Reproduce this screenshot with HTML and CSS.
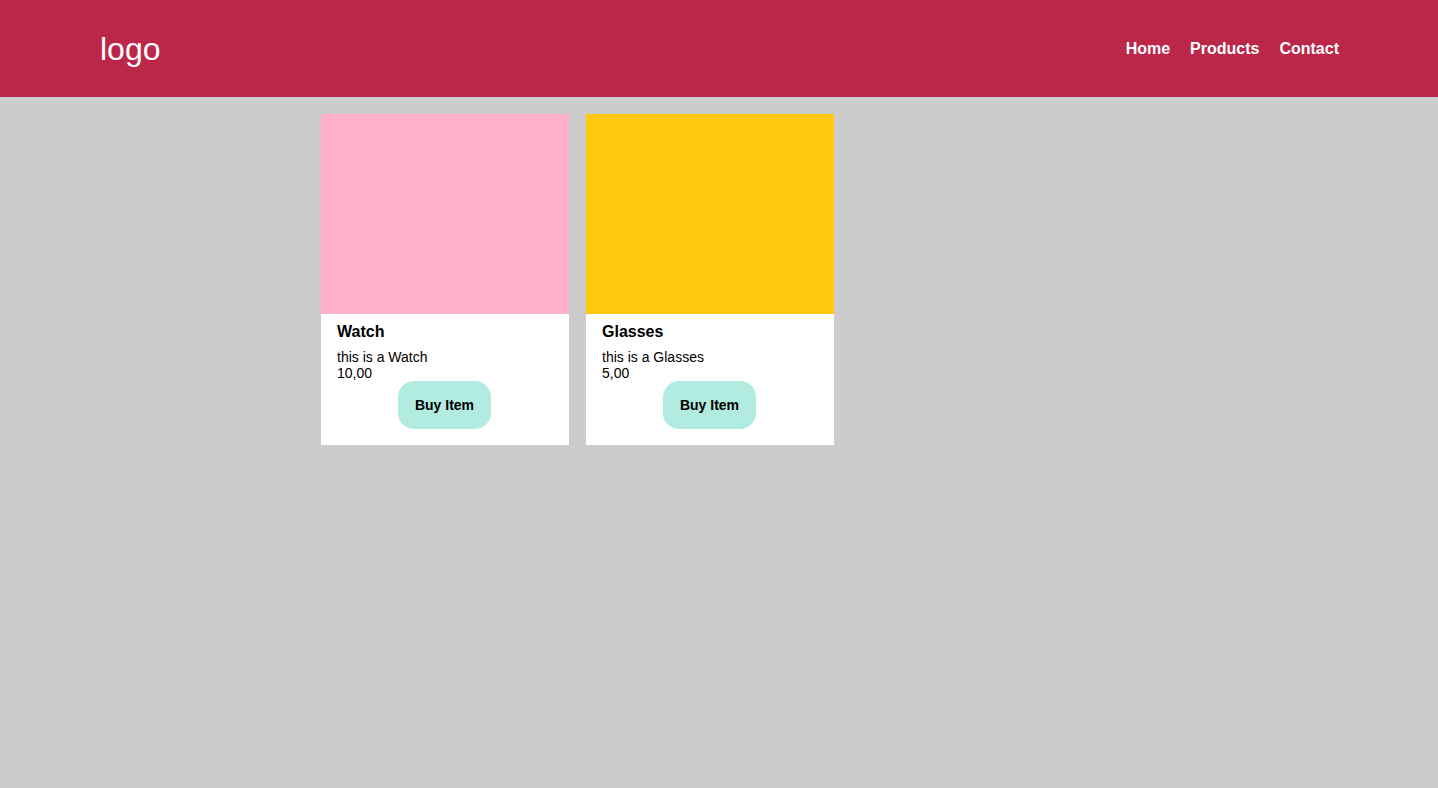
FILE: index.html
```html
<!DOCTYPE html>
<html lang="en">
<head>
<meta charset="utf-8">
<title>Shop</title>
<link rel="stylesheet" href="styles.css">
</head>
<body>
<header class="header">
  <div class="logo">logo</div>
  <nav class="nav">
    <a href="#">Home</a>
    <a href="#">Products</a>
    <a href="#">Contact</a>
  </nav>
</header>
<main class="products">
  <div class="card">
    <div class="card-img pink"></div>
    <div class="card-body">
      <h3 class="card-title">Watch</h3>
      <p class="card-text">this is a Watch</p>
      <p class="card-text">10,00</p>
      <button class="buy">Buy Item</button>
    </div>
  </div>
  <div class="card">
    <div class="card-img yellow"></div>
    <div class="card-body">
      <h3 class="card-title">Glasses</h3>
      <p class="card-text">this is a Glasses</p>
      <p class="card-text">5,00</p>
      <button class="buy">Buy Item</button>
    </div>
  </div>
</main>
</body>
</html>
```
FILE: styles.css
```css
* { box-sizing: border-box; }
html, body { margin: 0; padding: 0; }
body {
  background: #cccccc;
  font-family: "Liberation Sans", Arial, sans-serif;
  color: #000;
  min-height: 788px;
}
.header {
  height: 97px;
  background: #bb2649;
  display: flex;
  align-items: center;
  justify-content: space-between;
  padding: 0 99px 0 100px;
}
.logo {
  color: #fff;
  font-size: 32px;
  line-height: 1;
}
.nav {
  display: flex;
  gap: 20px;
}
.nav a {
  color: #fff;
  text-decoration: none;
  font-weight: bold;
  font-size: 16px;
}
.products {
  width: 796px;
  margin: 0 auto;
  padding-top: 17px;
  display: flex;
  gap: 17px;
  align-items: flex-start;
}
.card {
  width: 248px;
  background: #fff;
}
.card-img { height: 200px; }
.pink { background: #ffafcc; }
.yellow { background: #ffca0d; }
.card-body {
  padding: 9px 16px 16px;
  display: flex;
  flex-direction: column;
}
.card-title {
  margin: 0 0 8px;
  font-size: 16px;
  line-height: 18px;
  font-weight: bold;
}
.card-text {
  margin: 0;
  font-size: 14px;
  line-height: 16px;
}
.buy {
  align-self: center;
  width: 93px;
  margin-left: -1px;
  border: none;
  background: #b2ebe0;
  border-radius: 16px;
  padding: 16px 0;
  font-family: "Liberation Sans", Arial, sans-serif;
  font-weight: bold;
  font-size: 14px;
  line-height: 16px;
  color: #000;
  cursor: pointer;
}
```
